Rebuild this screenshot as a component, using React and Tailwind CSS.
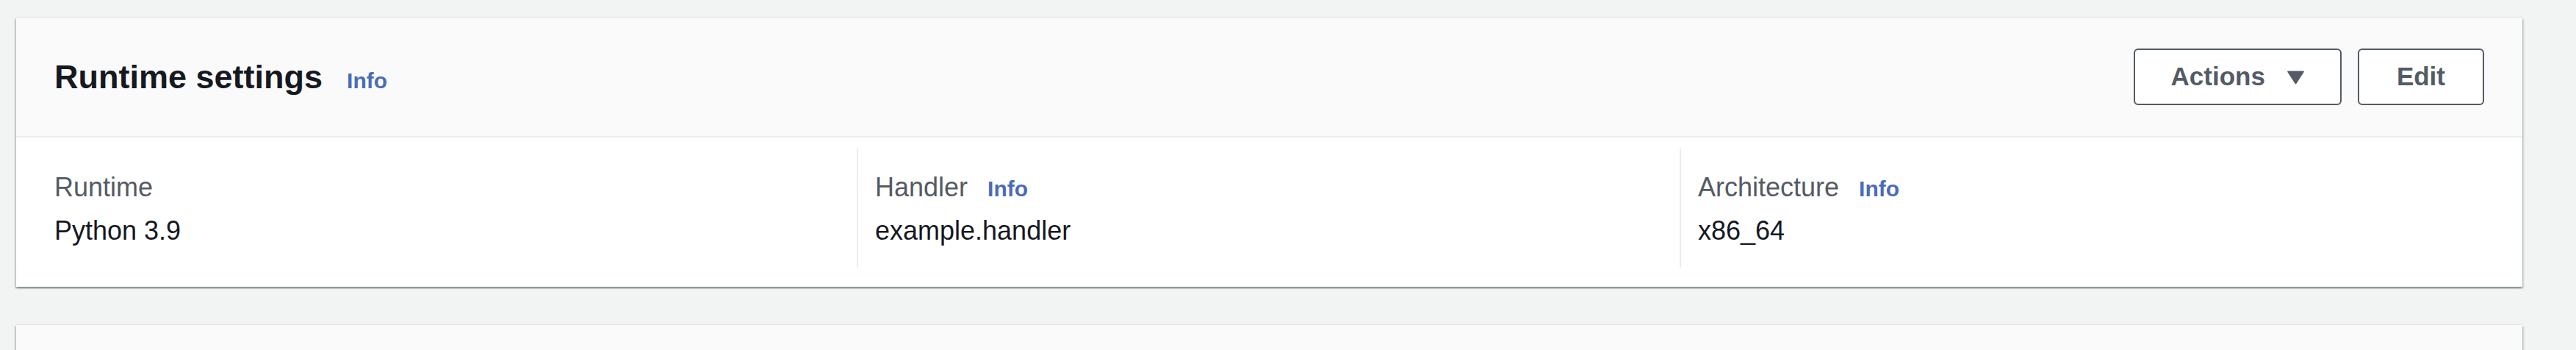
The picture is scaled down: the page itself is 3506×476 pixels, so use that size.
import React from "react";

const cardShadow =
  "shadow-[0_2px_2px_0_rgba(0,28,36,0.3),2px_2px_2px_0_rgba(0,28,36,0.15),-2px_2px_2px_0_rgba(0,28,36,0.15),0_-1px_1px_0_rgba(0,28,36,0.06)]";

function InfoLink() {
  return <a className="text-[30px] font-bold text-[#4a6cb8] leading-none cursor-pointer">Info</a>;
}

function Field({ label, value, info, className }) {
  return (
    <div className={className}>
      <div className="flex items-baseline text-[36px] leading-[50px] text-[#545b64]">
        <span>{label}</span>
        {info && <span className="ml-[27px]"><InfoLink /></span>}
      </div>
      <div className="mt-[9px] text-[36px] leading-[50px] text-[#16191f]">{value}</div>
    </div>
  );
}

function ActionsButton() {
  return (
    <button className="h-[77px] flex items-center border-2 border-[#545b64] rounded-[6px] bg-white pl-[49px] pr-[48px] text-[35px] font-bold text-[#545b64]">
      <span>Actions</span>
      <svg className="ml-[29px]" width="25" height="20" viewBox="0 0 25 20">
        <path d="M2 1.5 H23 Q24.5 1.5 23.6 3 L13.6 18.5 Q12.5 20 11.4 18.5 L1.4 3 Q0.5 1.5 2 1.5 Z" fill="#545b64" />
      </svg>
    </button>
  );
}

export default function App() {
  return (
    <div
      className="w-full h-[476px] overflow-hidden bg-[#f2f3f3] pt-[24px] pl-[22px] pr-[73px]"
      style={{ fontFamily: '"Liberation Sans", Arial, sans-serif' }}
    >
      <div className={`bg-white ${cardShadow}`}>
        <div className="h-[163px] bg-[#fafafa] border-b-2 border-[#eaeded] px-[52px] flex items-center justify-between">
          <div className="flex items-baseline">
            <h2 className="text-[45px] leading-[55px] font-bold text-[#16191f]">Runtime settings</h2>
            <span className="ml-[33px]"><InfoLink /></span>
          </div>
          <div className="flex items-center gap-[22px]">
            <ActionsButton />
            <button className="h-[77px] border-2 border-[#545b64] rounded-[6px] bg-white px-[51px] text-[35px] font-bold text-[#545b64]">
              Edit
            </button>
          </div>
        </div>
        <div className="flex px-[52px] pt-[15px] pb-[26px]">
          <Field className="w-[1092px] pt-[28px] pb-[25px]" label="Runtime" value="Python 3.9" />
          <Field
            className="w-[1120px] border-l-2 border-[#eaeded] pl-[23px] pt-[28px] pb-[25px]"
            label="Handler"
            value="example.handler"
            info
          />
          <Field
            className="flex-1 border-l-2 border-[#eaeded] pl-[23px] pt-[28px] pb-[25px]"
            label="Architecture"
            value="x86_64"
            info
          />
        </div>
      </div>
      <div className={`mt-[52px] h-[120px] bg-[#fafafa] ${cardShadow}`} />
    </div>
  );
}
